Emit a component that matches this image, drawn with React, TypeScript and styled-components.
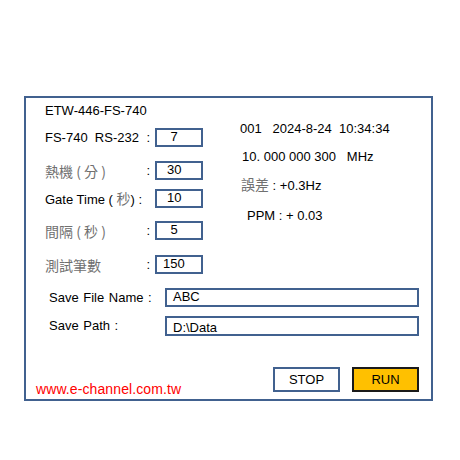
import React from "react";
import styled, { createGlobalStyle } from "styled-components";

const Global = createGlobalStyle`
  html, body { margin: 0; padding: 0; background: #ffffff; }
  body { font-family: "Liberation Sans", Arial, sans-serif; color: #000; }
`;

const Frame = styled.div`
  box-sizing: border-box;
  width: 409px;
  height: 305px;
  margin: 96px 0 0 24px;
  border: 2px solid #41618f;
  padding: 5px 12px 0 19px;
  display: flex;
  flex-direction: column;
  font-size: 13px;
  line-height: 16px;
`;

const Top = styled.div`
  display: flex;
  gap: 11px;
`;

const LeftCol = styled.div`
  width: 184px;
  display: flex;
  flex-direction: column;
`;

const Title = styled.div`
  height: 16px;
`;

const FieldRow = styled.div<{ $mt: number }>`
  display: grid;
  grid-template-columns: 110px 48px;
  align-items: center;
  margin-top: ${(p) => p.$mt}px;
`;

const Label = styled.div`
  display: flex;
  justify-content: space-between;
  padding-right: 5px;
  white-space: nowrap;
  line-height: 16px;
`;

const Cjk = styled.span`
  font-family: "Noto Sans CJK TC", "Noto Sans CJK SC", sans-serif;
  color: #707070;
  font-size: 14px;
  line-height: 16px;
`;

const Box = styled.div<{ $h?: number }>`
  box-sizing: border-box;
  height: ${(p) => p.$h ?? 19}px;
  border: 2px solid #41618f;
  padding: 0 0 0 10px;
  line-height: 14px;
  background: #fff;
`;

const RightCol = styled.div`
  display: flex;
  flex-direction: column;
  padding-top: 18px;
  white-space: nowrap;
`;

const InfoLine = styled.div<{ $mt: number; $indent: number }>`
  margin-top: ${(p) => p.$mt}px;
  padding-left: ${(p) => p.$indent}px;
  height: 16px;
  line-height: 16px;
`;

const SaveRow = styled.div<{ $mt: number }>`
  display: grid;
  grid-template-columns: 116px 1fr;
  align-items: center;
  margin: ${(p) => p.$mt}px 0 0 4px;
`;

const SaveLabel = styled.div`
  word-spacing: 1px;
`;

const Footer = styled.div`
  display: flex;
  justify-content: space-between;
  align-items: flex-end;
  margin: 31px 0 0 -9px;
`;

const Url = styled.div`
  color: #ff0000;
  font-size: 14px;
  letter-spacing: 0.1px;
`;

const Buttons = styled.div`
  display: flex;
  gap: 12px;
  padding-bottom: 5px;
`;

const Button = styled.div<{ $run?: boolean }>`
  box-sizing: border-box;
  width: 67px;
  height: 25px;
  display: flex;
  align-items: center;
  justify-content: center;
  border: 2px solid ${(p) => (p.$run ? "#1a1a1a" : "#41618f")};
  background: ${(p) => (p.$run ? "#ffc000" : "#ffffff")};
  font-size: 13px;
`;

export default function App() {
  return (
    <>
      <Global />
      <Frame>
        <Top>
          <LeftCol>
            <Title>ETW-446-FS-740</Title>
            <FieldRow $mt={9}>
              <Label>
                <span>FS-740&nbsp; RS-232</span>
                <span>:</span>
              </Label>
              <Box>&nbsp;7</Box>
            </FieldRow>
            <FieldRow $mt={14}>
              <Label>
                <Cjk>熱機 ( 分 )</Cjk>
                <span>:</span>
              </Label>
              <Box>30</Box>
            </FieldRow>
            <FieldRow $mt={9}>
              <Label>
                <span>
                  Gate Time ( <Cjk>秒</Cjk>) :
                </span>
              </Label>
              <Box>10</Box>
            </FieldRow>
            <FieldRow $mt={13}>
              <Label>
                <Cjk>間隔 ( 秒 )</Cjk>
                <span>:</span>
              </Label>
              <Box>&nbsp;5</Box>
            </FieldRow>
            <FieldRow $mt={15}>
              <Label>
                <Cjk>測試筆數</Cjk>
                <span>:</span>
              </Label>
              <Box style={{ paddingLeft: 6 }}>150</Box>
            </FieldRow>
          </LeftCol>
          <RightCol>
            <InfoLine $mt={0} $indent={0}>
              001&nbsp;&nbsp; 2024-8-24&nbsp; 10:34:34
            </InfoLine>
            <InfoLine $mt={12} $indent={2}>
              10. 000 000 300&nbsp;&nbsp; MHz
            </InfoLine>
            <InfoLine $mt={11} $indent={1}>
              <Cjk>誤差</Cjk> : +0.3Hz
            </InfoLine>
            <InfoLine $mt={16} $indent={7}>
              PPM : + 0.03
            </InfoLine>
          </RightCol>
        </Top>
        <SaveRow $mt={14}>
          <SaveLabel>Save File Name :</SaveLabel>
          <Box style={{ paddingLeft: 6 }}>ABC</Box>
        </SaveRow>
        <SaveRow $mt={9}>
          <SaveLabel>Save Path :</SaveLabel>
          <Box $h={20} style={{ paddingLeft: 6, lineHeight: "20px" }}>
            D:\Data
          </Box>
        </SaveRow>
        <Footer>
          <Url>www.e-channel.com.tw</Url>
          <Buttons>
            <Button>STOP</Button>
            <Button $run>RUN</Button>
          </Buttons>
        </Footer>
      </Frame>
    </>
  );
}
